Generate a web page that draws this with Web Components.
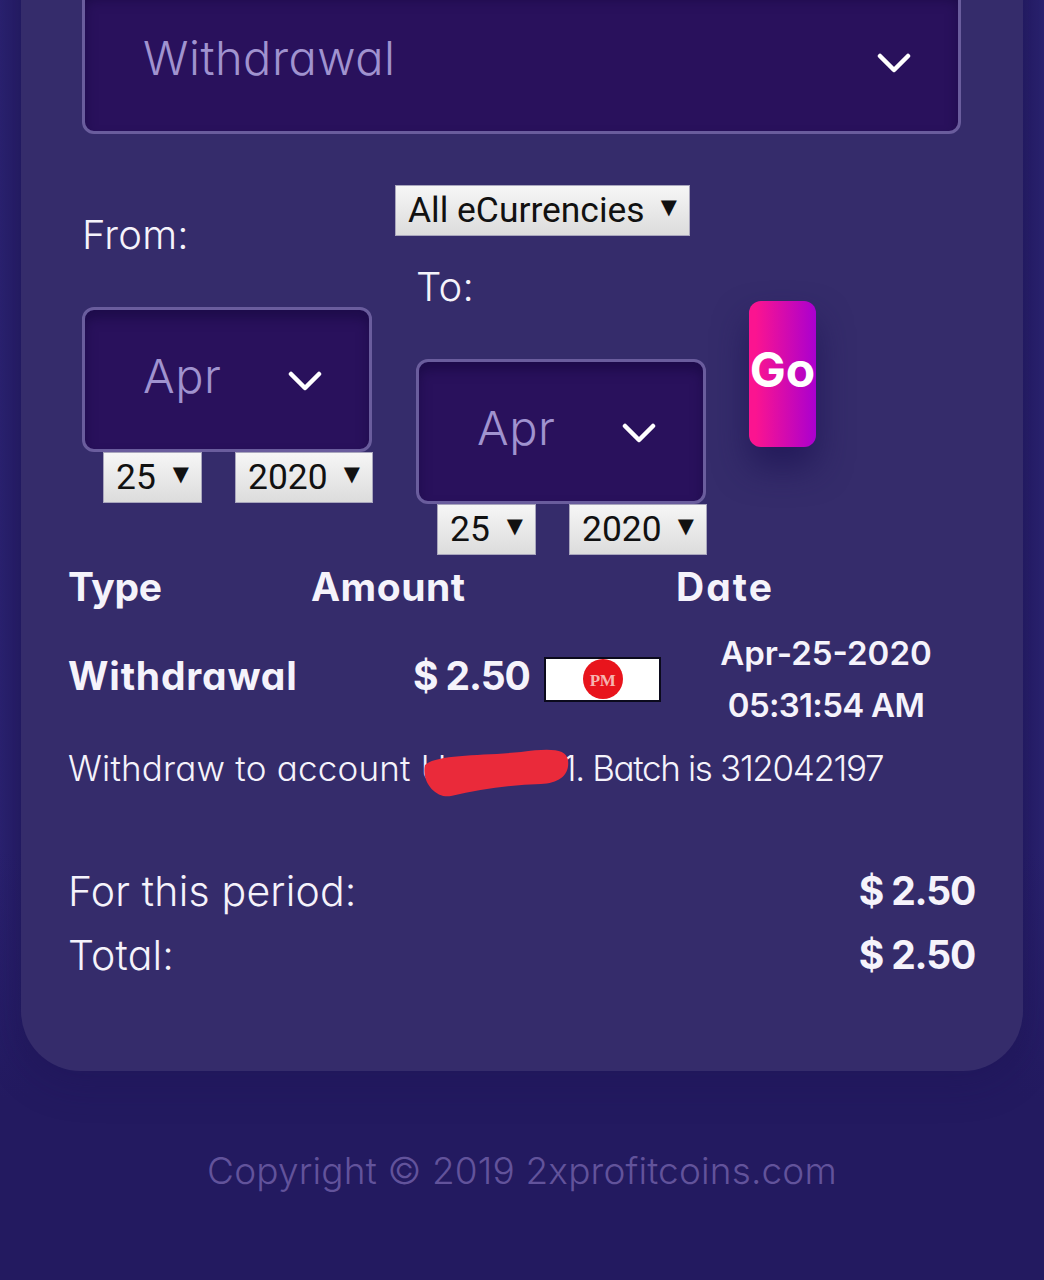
<!DOCTYPE html>
<html>
<head>
<meta charset="utf-8">
<title>Transactions</title>
<style>
  html, body { margin: 0; background: #231a60; }
  body {
    height: 1280px;
    overflow: hidden;
    color: #f5f3fb;
    font-family: Inter, "Noto Sans", sans-serif;
    font-feature-settings: "cv11" 1;
  }
</style>
</head>
<body>
<history-page>
  <history-card>
    <dark-select style="--select-width:879px">Withdrawal</dark-select>

    <history-filters>
      <date-range slot="from" label="From:" offset="24"></date-range>
      <native-select slot="currency" width="295">All eCurrencies</native-select>
      <date-range slot="to" label="To:" offset="25" indent="21"></date-range>
      <go-button slot="go">Go</go-button>
    </history-filters>

    <history-head></history-head>
    <history-row></history-row>
    <history-detail></history-detail>

    <period-total style="margin-top:65px" label="For this period:">$ 2.50</period-total>
    <period-total label="Total:">$ 2.50</period-total>
  </history-card>
  <page-footer>Copyright © 2019 2xprofitcoins.com</page-footer>
</history-page>

<script>
/** Page shell, the card runs off the top of the window. */
class HistoryPage extends HTMLElement {
  constructor() {
    super();
    this.attachShadow({ mode: 'open' });
    this.shadowRoot.innerHTML = `
      <style>
        :host {
          display: flow-root;
          padding: 0 21px;
          height: 1280px;
          box-sizing: border-box;
          background:
            linear-gradient(180deg, rgba(35, 26, 96, 0) 850px, #231a60 1100px),
            linear-gradient(90deg, #2a2270 0, #231a60 30px, #231a60 1014px, #2a2270 100%);
        }
      </style>
      <slot></slot>
    `;
  }
}

/** Lighter rounded panel. */
class HistoryCard extends HTMLElement {
  constructor() {
    super();
    this.attachShadow({ mode: 'open' });
    this.shadowRoot.innerHTML = `
      <style>
        :host {
          display: block;
          width: 1002px;
          box-sizing: border-box;
          margin-top: -60px;
          padding: 49px 48px 84px 47px;
          background: #352c6b;
          border-radius: 0 0 60px 60px;
          box-shadow: 0 10px 40px rgba(27, 18, 80, .3);
        }
      </style>
      <slot></slot>
    `;
  }
}

/** Dark styled dropdown with a chevron. */
class DarkSelect extends HTMLElement {
  constructor() {
    super();
    this.attachShadow({ mode: 'open' });
    this.shadowRoot.innerHTML = `
      <style>
        :host {
          display: block;
          box-sizing: border-box;
          width: var(--select-width, 290px);
          height: 145px;
          margin-left: var(--select-left, 14px);
          background: #29115c;
          border: 3px solid #6a5d9d;
          border-radius: 12px;
          box-shadow: inset 0 8px 12px rgba(20, 8, 60, .55);
          color: #a093cf;
          font-size: 47px;
          font-weight: 300;
          letter-spacing: .5px;
        }
        .inner {
          display: flex;
          align-items: center;
          justify-content: space-between;
          height: 100%;
          padding: 0 47px 9px 58px;
          box-sizing: border-box;
        }
        svg { display: block; margin-top: 12px; }
      </style>
      <div class="inner">
        <span><slot></slot></span>
        <svg width="34" height="22" viewBox="0 0 34 22" fill="none" stroke="#fff" stroke-width="4.5" stroke-linecap="round" stroke-linejoin="round">
          <path d="M3 4 L17 18 L31 4"/>
        </svg>
      </div>
    `;
  }
}

/** Browser default looking select, drawn so the arrow sits like the reference. */
class NativeSelect extends HTMLElement {
  constructor() {
    super();
    const width = this.getAttribute('width') || 99;
    this.attachShadow({ mode: 'open' });
    this.shadowRoot.innerHTML = `
      <style>
        :host {
          display: block;
          box-sizing: border-box;
          width: ${width}px;
          height: 51px;
          background: linear-gradient(#f6f6f6, #dcdcdc);
          border: 1px solid #a9a6bd;
          color: #111;
          font-family: Roboto, sans-serif;
          font-feature-settings: normal;
          font-size: 35.4px;
          font-weight: 400;
          line-height: 49px;
        }
        .inner {
          display: flex;
          justify-content: space-between;
          padding: 0 12px 0 12px;
        }
        .arrow { font-size: 21px; line-height: 42px; font-family: "DejaVu Sans", sans-serif; }
      </style>
      <div class="inner"><span><slot></slot></span><span class="arrow">▼</span></div>
    `;
  }
}

/** Label, month dropdown and day and year selects. */
class DateRange extends HTMLElement {
  constructor() {
    super();
    const offset = this.getAttribute('offset') || 0;
    const indent = this.getAttribute('indent') || 0;
    this.attachShadow({ mode: 'open' });
    this.shadowRoot.innerHTML = `
      <style>
        :host {
          display: block;
          width: 290px;
          padding-top: ${offset}px;
          margin-left: ${indent}px;
        }
        .label {
          font-size: 40px;
          font-weight: 300;
          line-height: 52px;
          margin-bottom: 46px;
          letter-spacing: .2px;
        }
        dark-select { --select-left: 0; --select-width: 290px; }
        .dates {
          display: flex;
          justify-content: space-between;
          padding-left: 21px;
          margin-right: -1px;
        }
      </style>
      <div class="label">${this.getAttribute('label')}</div>
      <dark-select>Apr</dark-select>
      <div class="dates">
        <native-select width="99">25</native-select>
        <native-select width="138">2020</native-select>
      </div>
    `;
  }
}

/** Filter row: from range, then currency and to range stacked, then the button. */
class HistoryFilters extends HTMLElement {
  constructor() {
    super();
    this.attachShadow({ mode: 'open' });
    this.shadowRoot.innerHTML = `
      <style>
        :host {
          display: flex;
          align-items: flex-start;
          margin: 51px 0 0 14px;
        }
        .middle { margin-left: 23px; }
        .go { margin: 116px 0 0 43px; }
      </style>
      <slot name="from"></slot>
      <div class="middle">
        <slot name="currency"></slot>
        <slot name="to"></slot>
      </div>
      <div class="go"><slot name="go"></slot></div>
    `;
  }
}

/** Pink submit button. */
class GoButton extends HTMLElement {
  constructor() {
    super();
    this.attachShadow({ mode: 'open' });
    this.shadowRoot.innerHTML = `
      <style>
        :host {
          display: flex;
          align-items: center;
          justify-content: center;
          box-sizing: border-box;
          width: 67px;
          height: 146px;
          padding-bottom: 10px;
          border-radius: 12px;
          background: linear-gradient(90deg, #fb1490 10%, #aa00cf);
          box-shadow: 0 20px 34px rgba(30, 20, 84, .75);
          color: #fff;
          font-size: 48px;
          font-weight: 700;
        }
      </style>
      <slot></slot>
    `;
  }
}

/** Column titles. */
class HistoryHead extends HTMLElement {
  constructor() {
    super();
    this.attachShadow({ mode: 'open' });
    this.shadowRoot.innerHTML = `
      <style>
        :host {
          display: grid;
          grid-template-columns: 243px 365px 1fr;
          height: 64px;
          line-height: 64px;
          font-size: 39px;
          font-weight: 700;
          letter-spacing: .5px;
        }
        .type { letter-spacing: -.3px; }
        .date { letter-spacing: 2px; }
      </style>
      <span class="type">Type</span><span>Amount</span><span class="date">Date</span>
    `;
  }
}

/** One transaction. */
class HistoryRow extends HTMLElement {
  constructor() {
    super();
    this.attachShadow({ mode: 'open' });
    this.shadowRoot.innerHTML = `
      <style>
        :host {
          display: flex;
          align-items: center;
          margin-top: 8px;
          font-weight: 700;
        }
        .type { width: 345px; font-size: 39px; letter-spacing: .8px; margin-bottom: 8px; }
        .amount { width: 131px; font-size: 39px; letter-spacing: -1.1px; margin-bottom: 8px; }
        .date {
          width: 268px;
          margin-left: 31px;
          text-align: center;
          font-size: 33px;
          font-weight: 600;
          line-height: 52px;
          letter-spacing: 0;
        }
        .time { letter-spacing: -.7px; }
      </style>
      <span class="type">Withdrawal</span>
      <span class="amount">$ 2.50</span>
      <pm-badge></pm-badge>
      <div class="date">Apr-25-2020<br><span class="time">05:31:54 AM</span></div>
    `;
  }
}

/** Small payment system logo. */
class PmBadge extends HTMLElement {
  constructor() {
    super();
    this.attachShadow({ mode: 'open' });
    this.shadowRoot.innerHTML = `
      <style>
        :host {
          display: flex;
          align-items: center;
          justify-content: center;
          box-sizing: border-box;
          width: 117px;
          height: 45px;
          background: #fff;
          border: 2px solid #0b0a1c;
        }
        .dot {
          width: 40px;
          height: 40px;
          border-radius: 50%;
          background: #e8141c;
          color: #f6b4b0;
          font: 700 17px/44px "Liberation Serif", serif;
          letter-spacing: -.5px;
          text-align: center;
        }
      </style>
      <div class="dot">PM</div>
    `;
  }
}

/** Detail line with the account number scribbled out. */
class HistoryDetail extends HTMLElement {
  constructor() {
    super();
    this.attachShadow({ mode: 'open' });
    this.shadowRoot.innerHTML = `
      <style>
        :host {
          display: block;
          position: relative;
          margin-top: 11px;
          font-size: 35px;
          font-weight: 300;
          line-height: 52px;
          letter-spacing: .2px;
          white-space: nowrap;
        }
        .gap { display: inline-block; width: 116px; }
        .batch { letter-spacing: -1.35px; }
        svg { position: absolute; left: 355px; top: 5px; }
      </style>
      Withdraw to account U<span class="gap"></span><span class="batch">1. Batch is 312042197</span>
      <svg width="150" height="52" viewBox="0 0 150 52">
        <path fill="#ea2a3a" d="M2 18 C14 7 58 9 98 5 C128 1 143 2 145 13 C147 28 136 36 118 37 C88 38 58 42 28 49 C14 52 -2 36 2 18 Z"/>
      </svg>
    `;
  }
}

/** Label on the left, sum on the right. */
class PeriodTotal extends HTMLElement {
  constructor() {
    super();
    this.attachShadow({ mode: 'open' });
    this.shadowRoot.innerHTML = `
      <style>
        :host {
          display: flex;
          justify-content: space-between;
          height: 64px;
          line-height: 64px;
          font-size: 41px;
          font-weight: 300;
          letter-spacing: .2px;
        }
        b { font-size: 39px; font-weight: 700; letter-spacing: -1.2px; }
      </style>
      <span>${this.getAttribute('label')}</span>
      <b><slot></slot></b>
    `;
  }
}

/** Copyright line. */
class PageFooter extends HTMLElement {
  constructor() {
    super();
    this.attachShadow({ mode: 'open' });
    this.shadowRoot.innerHTML = `
      <style>
        :host {
          display: block;
          padding-top: 70px;
          line-height: 60px;
          text-align: center;
          font-size: 37px;
          font-weight: 300;
          color: #62539b;
          letter-spacing: .15px;
          white-space: nowrap;
        }
      </style>
      <slot></slot>
    `;
  }
}

customElements.define('history-page', HistoryPage);
customElements.define('history-card', HistoryCard);
customElements.define('dark-select', DarkSelect);
customElements.define('native-select', NativeSelect);
customElements.define('date-range', DateRange);
customElements.define('history-filters', HistoryFilters);
customElements.define('go-button', GoButton);
customElements.define('history-head', HistoryHead);
customElements.define('history-row', HistoryRow);
customElements.define('pm-badge', PmBadge);
customElements.define('history-detail', HistoryDetail);
customElements.define('period-total', PeriodTotal);
customElements.define('page-footer', PageFooter);
</script>
</body>
</html>
